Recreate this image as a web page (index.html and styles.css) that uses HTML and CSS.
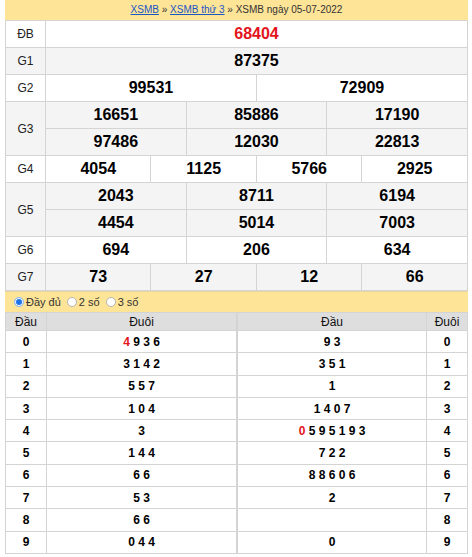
FILE: index.html
```html
<!DOCTYPE html>
<html lang="vi">
<head>
<meta charset="utf-8">
<title>XSMB 05-07-2022</title>
<link rel="stylesheet" href="styles.css">
</head>
<body>
<div class="wrap">
  <div class="crumb"><a href="#">XSMB</a> » <a href="#">XSMB thứ 3</a> » XSMB ngày 05-07-2022</div>
  <table class="kq">
    <colgroup>
      <col class="c-lbl"><col><col><col><col><col><col><col><col><col><col><col><col>
    </colgroup>
    <tr class="w"><td class="lbl">ĐB</td><td colspan="12" class="num db">68404</td></tr>
    <tr class="g"><td class="lbl">G1</td><td colspan="12" class="num">87375</td></tr>
    <tr class="w"><td class="lbl">G2</td><td colspan="6" class="num">99531</td><td colspan="6" class="num">72909</td></tr>
    <tr class="g"><td class="lbl" rowspan="2">G3</td><td colspan="4" class="num">16651</td><td colspan="4" class="num">85886</td><td colspan="4" class="num">17190</td></tr>
    <tr class="g"><td colspan="4" class="num">97486</td><td colspan="4" class="num">12030</td><td colspan="4" class="num">22813</td></tr>
    <tr class="w"><td class="lbl">G4</td><td colspan="3" class="num">4054</td><td colspan="3" class="num">1125</td><td colspan="3" class="num">5766</td><td colspan="3" class="num">2925</td></tr>
    <tr class="g"><td class="lbl" rowspan="2">G5</td><td colspan="4" class="num">2043</td><td colspan="4" class="num">8711</td><td colspan="4" class="num">6194</td></tr>
    <tr class="g"><td colspan="4" class="num">4454</td><td colspan="4" class="num">5014</td><td colspan="4" class="num">7003</td></tr>
    <tr class="w"><td class="lbl">G6</td><td colspan="4" class="num">694</td><td colspan="4" class="num">206</td><td colspan="4" class="num">634</td></tr>
    <tr class="g"><td class="lbl">G7</td><td colspan="3" class="num">73</td><td colspan="3" class="num">27</td><td colspan="3" class="num">12</td><td colspan="3" class="num">66</td></tr>
  </table>
  <div class="opts">
    <span class="opt"><span class="radio on"></span>Đầy đủ</span>
    <span class="opt"><span class="radio"></span>2 số</span>
    <span class="opt"><span class="radio"></span>3 số</span>
  </div>
  <div class="loto">
    <table class="lt lt-left">
      <tr class="hd"><th class="k">Đầu</th><th>Đuôi</th></tr>
      <tr><td class="k">0</td><td><span class="red">4</span> 9 3 6</td></tr>
      <tr><td class="k">1</td><td>3 1 4 2</td></tr>
      <tr><td class="k">2</td><td>5 5 7</td></tr>
      <tr><td class="k">3</td><td>1 0 4</td></tr>
      <tr><td class="k">4</td><td>3</td></tr>
      <tr><td class="k">5</td><td>1 4 4</td></tr>
      <tr><td class="k">6</td><td>6 6</td></tr>
      <tr><td class="k">7</td><td>5 3</td></tr>
      <tr><td class="k">8</td><td>6 6</td></tr>
      <tr><td class="k">9</td><td>0 4 4</td></tr>
    </table>
    <table class="lt lt-right">
      <tr class="hd"><th>Đầu</th><th class="k2">Đuôi</th></tr>
      <tr><td>9 3</td><td class="k2">0</td></tr>
      <tr><td>3 5 1</td><td class="k2">1</td></tr>
      <tr><td>1</td><td class="k2">2</td></tr>
      <tr><td>1 4 0 7</td><td class="k2">3</td></tr>
      <tr><td><span class="red">0</span> 5 9 5 1 9 3</td><td class="k2">4</td></tr>
      <tr><td>7 2 2</td><td class="k2">5</td></tr>
      <tr><td>8 8 6 0 6</td><td class="k2">6</td></tr>
      <tr><td>2</td><td class="k2">7</td></tr>
      <tr><td></td><td class="k2">8</td></tr>
      <tr><td>0</td><td class="k2">9</td></tr>
    </table>
  </div>
</div>
</body>
</html>
```
FILE: styles.css
```css
html, body {
  margin: 0;
  padding: 0;
  background: #fff;
}
body {
  font-family: "Liberation Sans", Arial, sans-serif;
  color: #000;
}
.wrap {
  margin: 0 5px;
  width: 463px;
}
.crumb {
  background: #fee497;
  height: 20px;
  line-height: 20px;
  text-align: center;
  font-size: 10px;
  color: #333;
}
.crumb a {
  color: #1a56c4;
  text-decoration: underline;
}
.kq {
  width: 463px;
  border-collapse: collapse;
  table-layout: fixed;
}
.kq col.c-lbl {
  width: 40px;
}
.kq td {
  border: 1px solid #d4d4d4;
  height: 26px;
  padding: 0;
  text-align: center;
  vertical-align: middle;
}
.kq tr.w td { background: #fff; }
.kq tr.g td { background: #f4f4f4; }
.kq .lbl {
  font-size: 12px;
  color: #222;
}
.kq .num {
  font-size: 16px;
  font-weight: bold;
  color: #000;
}
.kq .num.db {
  color: #e3141b;
}
.opts {
  background: #fee497;
  height: 21px;
  display: flex;
  align-items: center;
  padding-left: 9px;
  gap: 6px;
  font-size: 11px;
  color: #333;
  border-top: 1px solid #e8d6a0;
  box-sizing: border-box;
}
.opt {
  display: inline-flex;
  align-items: center;
}
.radio {
  width: 8px;
  height: 8px;
  border-radius: 50%;
  border: 1px solid #b5b5b5;
  background: #fff;
  margin-right: 2px;
  box-sizing: content-box;
}
.radio.on {
  background: #1e73e8;
  border-color: #9cc1f2;
  box-shadow: inset 0 0 0 1px #fff;
  border-width: 1px;
}
.loto {
  display: flex;
}
.lt {
  border-collapse: collapse;
  table-layout: fixed;
}
.lt-left { width: 232px; }
.lt-right { width: 231px; }
.lt th, .lt td {
  border: 1px solid #d4d4d4;
  padding: 0;
  text-align: center;
  vertical-align: middle;
  font-size: 12px;
}
.lt th {
  background: #dedede;
  font-weight: normal;
  height: 17px;
  color: #111;
}
.lt td {
  height: 21.3px;
  font-weight: bold;
  background: #fff;
}
.lt-left .k { width: 40px; }
.lt-right .k2 { width: 40px; }
.red { color: #e3141b; }
```
